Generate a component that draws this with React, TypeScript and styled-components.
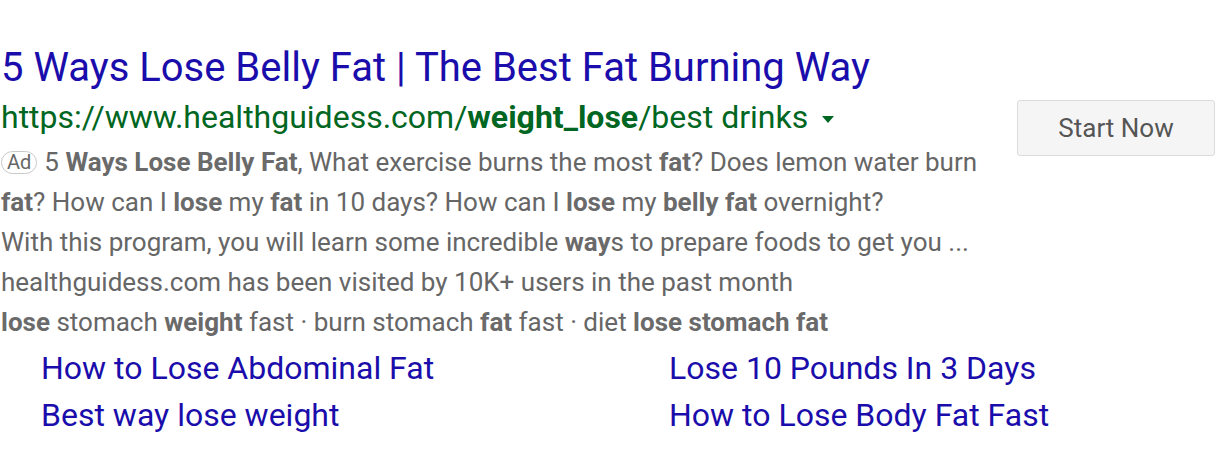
import React from "react";
import styled, { createGlobalStyle } from "styled-components";

const Global = createGlobalStyle`
  html, body { margin: 0; padding: 0; background: #fff; }
  body { font-family: Roboto, "Liberation Sans", Arial, sans-serif; }
`;

const Page = styled.div`
  display: flex;
  align-items: flex-start;
  justify-content: space-between;
  width: 1216px;
  padding-top: 44px;
  box-sizing: border-box;
`;

const Main = styled.div`
  display: flex;
  flex-direction: column;
  flex: 1;
  min-width: 0;
  padding-left: 1px;
`;

const Title = styled.a`
  font-size: 40px;
  line-height: 48px;
  color: #1a0dab;
  text-decoration: none;
  white-space: nowrap;
`;

const UrlRow = styled.div`
  display: flex;
  align-items: center;
  gap: 14px;
  font-size: 32px;
  line-height: 50px;
  color: #006621;
  white-space: nowrap;
`;

const Caret = styled.span`
  width: 0;
  height: 0;
  border-left: 6px solid transparent;
  border-right: 6px solid transparent;
  border-top: 7px solid #006621;
  margin-top: 4px;
`;

const Snippet = styled.p`
  margin: 0;
  font-size: 26px;
  line-height: 40px;
  color: #666;
  white-space: nowrap;
  b { font-weight: 700; color: #6a6a6a; }
`;

const AdBadge = styled.span`
  display: inline-block;
  font-size: 20px;
  line-height: 21px;
  padding: 0 5px;
  border: 1px solid #c9c9c9;
  border-radius: 12px;
  color: #666;
  margin-right: 7px;
  vertical-align: 2px;
`;

const Sitelinks = styled.div`
  display: grid;
  grid-template-columns: 628px auto;
  padding-left: 40px;
  margin-top: 3px;
`;

const Sitelink = styled.a`
  font-size: 32px;
  line-height: 47px;
  color: #1a0dab;
  text-decoration: none;
  white-space: nowrap;
`;

const Side = styled.div`
  flex-shrink: 0;
  padding-top: 56px;
  padding-right: 1px;
`;

const Button = styled.button`
  width: 198px;
  height: 56px;
  background: #f5f5f5;
  border: 1px solid #dcdcdc;
  border-radius: 3px;
  color: #555;
  font-family: Roboto, "Liberation Sans", Arial, sans-serif;
  font-size: 26px;
  cursor: pointer;
`;

export default function App() {
  return (
    <>
      <Global />
      <Page>
        <Main>
          <Title href="#">5 Ways Lose Belly Fat | The Best Fat Burning Way</Title>
          <UrlRow>
            <span>
              https://www.healthguidess.com/<b>weight_lose</b>/best drinks
            </span>
            <Caret />
          </UrlRow>
          <Snippet>
            <AdBadge>Ad</AdBadge>5 <b>Ways Lose Belly Fat</b>, What exercise burns the most <b>fat</b>? Does lemon water burn
            <br />
            <b>fat</b>? How can I <b>lose</b> my <b>fat</b> in 10 days? How can I <b>lose</b> my <b>belly fat</b> overnight?
            <br />
            With this program, you will learn some incredible <b>way</b>s to prepare foods to get you ...
            <br />
            healthguidess.com has been visited by 10K+ users in the past month
            <br />
            <b>lose</b> stomach <b>weight</b> fast · burn stomach <b>fat</b> fast · diet <b>lose stomach fat</b>
          </Snippet>
          <Sitelinks>
            <Sitelink href="#">How to Lose Abdominal Fat</Sitelink>
            <Sitelink href="#">Lose 10 Pounds In 3 Days</Sitelink>
            <Sitelink href="#">Best way lose weight</Sitelink>
            <Sitelink href="#">How to Lose Body Fat Fast</Sitelink>
          </Sitelinks>
        </Main>
        <Side>
          <Button>Start Now</Button>
        </Side>
      </Page>
    </>
  );
}
